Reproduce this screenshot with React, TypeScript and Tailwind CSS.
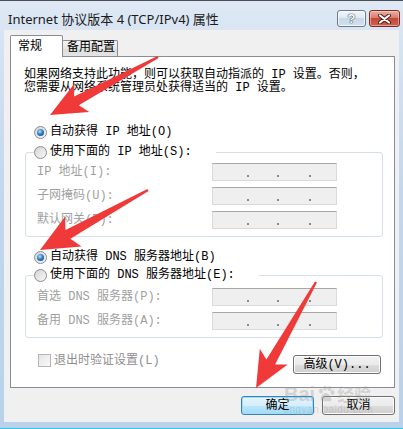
import React from "react"

const body = "font-['Liberation_Mono','Noto_Sans_CJK_SC',monospace]"

function Radio({ checked }: { checked?: boolean }) {
  return (
    <div className="w-[13px] h-[13px] rounded-full border border-[#8c8c8c] bg-[linear-gradient(135deg,#d4d4d4,#f8f8f8)] flex items-center justify-center shrink-0">
      {checked && (
        <div className="w-[7px] h-[7px] rounded-full bg-[radial-gradient(circle_at_40%_35%,#b5e2ff_0%,#2f80c8_45%,#0c3c74_100%)]" />
      )}
    </div>
  )
}

function Dot() {
  return <div className="w-[2px] h-[2px] mt-[11px] bg-[#8a8a8a]" />
}

function IpBox() {
  return (
    <div className="w-[125px] h-[18px] border border-[#dadada] border-t-[#a8a8a8] bg-[#efefef] flex">
      <div className="w-[34px]" />
      <Dot />
      <div className="w-[28px]" />
      <Dot />
      <div className="w-[30px]" />
      <Dot />
    </div>
  )
}

function Field({ label }: { label: string }) {
  return (
    <div className="flex items-center h-[18px]">
      <div className="w-[175px] text-[#9f9f9f] leading-[14px]">{label}</div>
      <IpBox />
    </div>
  )
}

function Button({ label, primary, w }: { label: string; primary?: boolean; w: string }) {
  return (
    <div
      className={
        primary
          ? `${w} h-[19px] rounded-[3px] border border-[#3c7fb1] bg-[linear-gradient(#e5f4fc,#d4eefb_50%,#bde6fd_50%,#a6d9f4)] shadow-[inset_0_0_0_1px_#94e2fc] flex items-center justify-center leading-[14px]`
          : `${w} h-[19px] rounded-[3px] border border-[#707070] bg-[linear-gradient(#f2f2f2,#ebebeb_50%,#dddddd_50%,#cfcfcf)] shadow-[inset_0_0_0_1px_#fcfcfc] flex items-center justify-center leading-[14px]`
      }
    >
      {label}
    </div>
  )
}

// red annotation arrows, tail -> tip
function arrowPoints(tx: number, ty: number, hx: number, hy: number, headLen: number, headHalf: number, tail: number, neck: number) {
  const dx = hx - tx
  const dy = hy - ty
  const len = Math.sqrt(dx * dx + dy * dy)
  const ux = dx / len
  const uy = dy / len
  const nx = -uy
  const ny = ux
  const bx = hx - ux * headLen
  const by = hy - uy * headLen
  const bx2 = bx - ux * 6
  const by2 = by - uy * 6
  const pts = [
    [tx + nx * tail, ty + ny * tail],
    [bx + nx * neck, by + ny * neck],
    [bx2 + nx * headHalf, by2 + ny * headHalf],
    [hx, hy],
    [bx2 - nx * headHalf, by2 - ny * headHalf],
    [bx - nx * neck, by - ny * neck],
    [tx - nx * tail, ty - ny * tail],
  ]
  return pts.map((p) => p[0].toFixed(1) + "," + p[1].toFixed(1)).join(" ")
}

export default function App() {
  return (
    <div className={`relative w-[403px] h-[429px] overflow-hidden flex flex-col bg-[linear-gradient(#dfe9f5,#d5e2f1_12%,#c2d7ed_45%,#b9d1ea)] text-[12px] text-black ${body}`}>
      <div className="h-[1px] bg-[#4a4f57]" />

      {/* title bar */}
      <div className="h-[29px] flex items-start">
        <div className="ml-[8px] mt-[10px] leading-[16px] text-[13px] text-[#1b1b1b] font-['Noto_Sans','Noto_Sans_CJK_SC',sans-serif] whitespace-nowrap">
          Internet 协议版本 4 (TCP/IPv4) 属性
        </div>
        <div className="ml-auto mr-[3px] mt-[9px] flex gap-[3px]">
          <div className="w-[29px] h-[17px] rounded-[3px] border border-[#6a7a8e] bg-[linear-gradient(#f1f5fb,#dde7f3_50%,#c9d7ea_50%,#d3e0f0)] shadow-[inset_0_0_0_1px_rgba(255,255,255,0.7)] flex items-center justify-center">
            <span className="font-['Liberation_Sans',sans-serif] font-bold text-[13px] leading-[13px] text-white [text-shadow:0_0_1px_#3e4b5e,0_0_1px_#3e4b5e,0_0_1px_#3e4b5e]">?</span>
          </div>
          <div className="w-[31px] h-[17px] rounded-[3px] border border-[#7b2b22] bg-[linear-gradient(#eab0a2,#d87d6c_45%,#c4483a_50%,#d0624f)] shadow-[inset_0_0_0_1px_rgba(255,220,210,0.5)] flex items-center justify-center">
            <svg width="15" height="10" viewBox="0 0 15 10">
              <path d="M3 1.5 L12 8.5 M12 1.5 L3 8.5" stroke="#4a1a14" strokeWidth="4" strokeLinecap="round" />
              <path d="M3 1.5 L12 8.5 M12 1.5 L3 8.5" stroke="#ffffff" strokeWidth="2.2" strokeLinecap="round" />
            </svg>
          </div>
        </div>
      </div>

      {/* client */}
      <div className="flex-1 flex">
        <div className="w-[4px]" />
        <div className="w-[395px] bg-[#f0f0f0] flex flex-col pl-[6px] pr-[4px] pt-[5px]">
          <div className="h-[21px] flex items-end">
            <div className="relative z-10 w-[53px] h-[22px] -mb-[1px] bg-white border border-b-0 border-[#898c95] rounded-t-[2px] pl-[7px] pt-[4px] leading-[14px]">
              常规
            </div>
            <div className="-ml-[1px] w-[56px] h-[16px] bg-[linear-gradient(#f4f4f4,#e6e6e6_50%,#dcdcdc_50%,#e4e4e4)] border border-b-0 border-[#898c95] rounded-t-[2px] pl-[4px] leading-[14px]">
              备用配置
            </div>
          </div>

          <div className="h-[332px] bg-white border border-[#898c95] flex flex-col">
            <p className="mt-[12px] pl-[13px] leading-[13px] whitespace-nowrap">
              如果网络支持此功能，则可以获取自动指派的 IP 设置。否则，
              <br />
              您需要从网络系统管理员处获得适当的 IP 设置。
            </p>

            <div className="mt-[29px] ml-[23px] h-[16px] flex items-center">
              <Radio checked />
              <span className="ml-[3px] leading-[14px]">自动获得 IP 地址(O)</span>
            </div>

            <fieldset className="mt-[4px] ml-[14px] mr-[11px] border border-[#d5dfe5] rounded-[3px]">
              <legend className="ml-[8px] pr-[24px]">
                <div className="h-[16px] flex items-center">
                  <Radio />
                  <span className="ml-[3px] leading-[14px]">使用下面的 IP 地址(S):</span>
                </div>
              </legend>
              <div className="pt-[3px] pb-[7px] pl-[11px] flex flex-col gap-[6px]">
                <Field label="IP 地址(I):" />
                <Field label="子网掩码(U):" />
                <Field label="默认网关(D):" />
              </div>
            </fieldset>

            <div className="mt-[12px] ml-[23px] h-[16px] flex items-center">
              <Radio checked />
              <span className="ml-[3px] leading-[14px]">自动获得 DNS 服务器地址(B)</span>
            </div>

            <fieldset className="mt-[2px] ml-[14px] mr-[11px] border border-[#d5dfe5] rounded-[3px]">
              <legend className="ml-[8px] pr-[24px]">
                <div className="h-[16px] flex items-center">
                  <Radio />
                  <span className="ml-[3px] leading-[14px]">使用下面的 DNS 服务器地址(E):</span>
                </div>
              </legend>
              <div className="pt-[5px] pb-[7px] pl-[11px] flex flex-col gap-[6px]">
                <Field label="首选 DNS 服务器(P):" />
                <Field label="备用 DNS 服务器(A):" />
              </div>
            </fieldset>

            <div className="mt-[16px] flex items-start">
              <div className="ml-[27px] h-[13px] flex items-center">
                <div className="w-[13px] h-[13px] border border-[#b5b5b5] bg-[linear-gradient(135deg,#e4e4e4,#fafafa)]" />
                <span className="ml-[3px] leading-[14px] text-[#8e8e8e]">退出时验证设置(L)</span>
              </div>
              <div className="ml-auto mr-[13px] mt-[1px]">
                <Button label="高级(V)..." w="w-[88px]" />
              </div>
            </div>
          </div>

          <div className="mt-[8px] flex justify-end gap-[8px]">
            <Button label="确定" primary w="w-[73px]" />
            <Button label="取消" w="w-[73px]" />
          </div>
        </div>
        <div className="w-[4px]" />
      </div>

      <div className="h-[6px] bg-[#b9d1ea]" />
      <div className="h-[1px] bg-[#33c6e8]" />

      {/* watermark */}
      <div className="absolute left-[284px] top-[384px] flex flex-col items-start text-[#9a9a9a]/35 pointer-events-none">
        <div className="flex items-center leading-[20px]">
          <span className="font-['Liberation_Sans',sans-serif] font-bold text-[20px]">Bai</span>
          <svg width="20" height="20" viewBox="0 0 20 20" className="mx-[1px]">
            <g fill="currentColor">
              <ellipse cx="5" cy="7" rx="2" ry="2.6" />
              <ellipse cx="9" cy="4" rx="2" ry="2.6" />
              <ellipse cx="13.5" cy="4.5" rx="2" ry="2.6" />
              <ellipse cx="16.5" cy="8.5" rx="2" ry="2.4" />
              <path d="M10 9 C6 9 4 14 5 16 C6 18 9 17 10.5 17 C12 17 15 18 15.5 16 C16 13 13 9 10 9 Z" />
            </g>
          </svg>
          <span className="font-['Noto_Sans_CJK_SC',sans-serif] font-bold text-[17px]">经验</span>
        </div>
        <span className="font-['Liberation_Sans',sans-serif] text-[10px] leading-[12px] tracking-[0.5px]">jingyan.baidu.com</span>
      </div>

      {/* annotation arrows */}
      <svg className="absolute left-0 top-0 pointer-events-none" width="403" height="429" viewBox="0 0 403 429">
        <polygon points={arrowPoints(158, 57, 50, 115, 30, 16, 1.2, 5)} fill="#f03a3a" />
        <polygon points={arrowPoints(148, 190, 40, 250, 32, 17, 1.2, 5)} fill="#f03a3a" />
        <polygon points={arrowPoints(316, 282, 256, 388, 30, 16, 1.2, 5)} fill="#f03a3a" />
      </svg>
    </div>
  )
}
